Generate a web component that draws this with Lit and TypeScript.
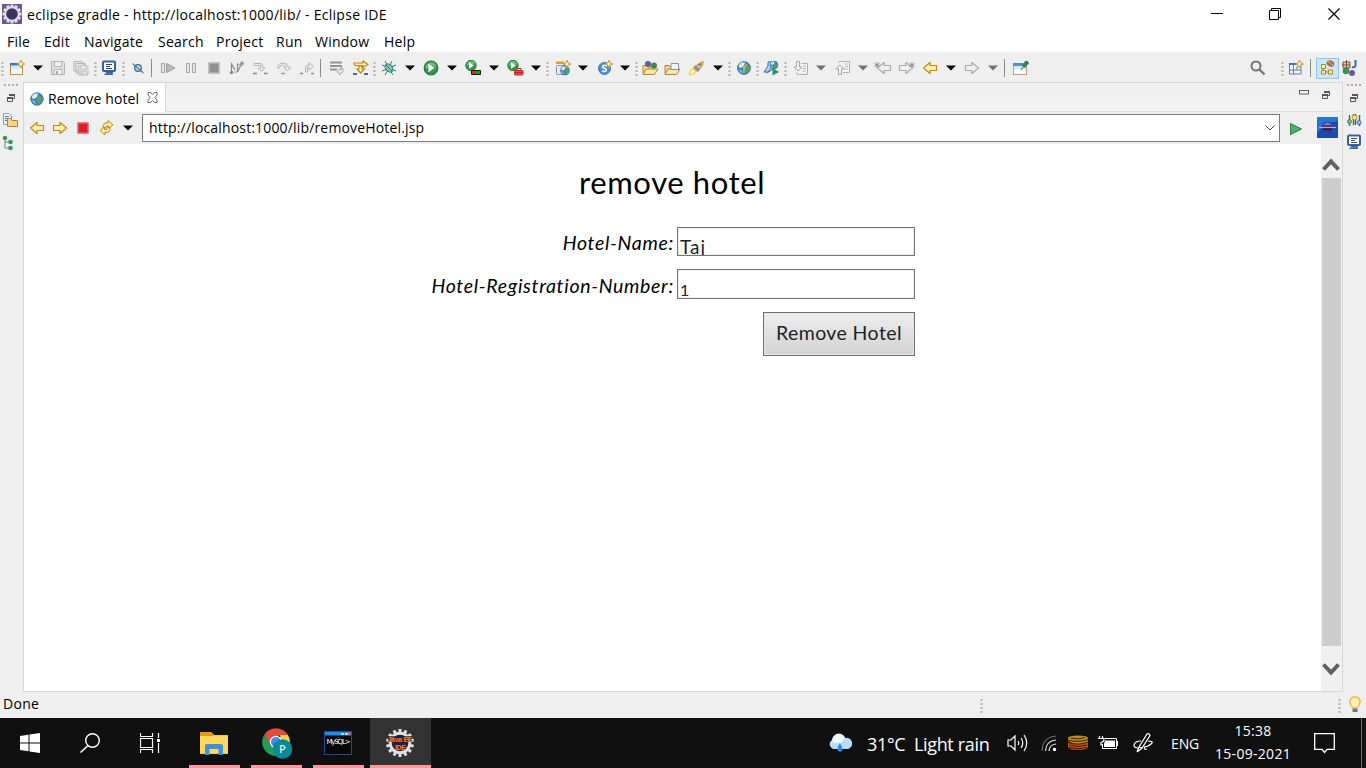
import { LitElement, html, svg, css, TemplateResult } from "lit";
import { customElement, property } from "lit/decorators.js";

const icon = (w: number, h: number, body: unknown) =>
  html`<svg width=${w} height=${h} viewBox="0 0 ${w} ${h}" fill="none">${body}</svg>`;

const star = (x: number, y: number) =>
  svg`<path transform="translate(${x} ${y})" d="M0-3.8 1.2-1.2 3.8 0 1.2 1.2 0 3.8-1.2 1.2-3.8 0-1.2-1.2Z" fill="#fff6c8" stroke="#bd942c" stroke-width="1"/>`;
const globe = (x: number, y: number, r: number) =>
  svg`<g transform="translate(${x} ${y}) scale(${r / 6})"><circle r="6" fill="#3d83bd" stroke="#2a6596" stroke-width=".6"/><path d="M-4-4Q-1-6 1-5L0-2-3 0-5-1Z" fill="#dcefff"/><path d="M1-3 5-2 5 2 2 5 0 2-1 0Z" fill="#5d9c62"/><path d="M-5 1-2 2-1 5Q-4 4-5 1Z" fill="#85bde5"/></g>`;
const play = (x: number, y: number, r: number) =>
  svg`<g transform="translate(${x} ${y}) scale(${r / 7})"><circle r="6.5" fill="#35964b" stroke="#23803b" stroke-width="1.2"/><path d="M-5-2Q-3-6 2-5.5 5-4 5-1 0-3-5 1Z" fill="#72bc7c"/><path d="M-2.5-4 3.5 0-2.5 4Z" fill="#fff"/></g>`;
const fold = svg`<path d="M1 13.5V5.5H5L6.5 7H12V13.5Z" fill="#f6d489" stroke="#b58430"/><path d="M1 14.5 4 9H16L12.5 14.5Z" fill="#fde8ac" stroke="#b58430"/>`;
const arrowR = (fill: string, stroke: string) =>
  svg`<path d="M1.5 5.500V10.500H8V13.500L14.500 8 8 2.500V5.500Z" fill=${fill} stroke=${stroke} stroke-width="1.2" stroke-linejoin="round"/>`;
const arrowL = (fill: string, stroke: string) =>
  svg`<path d="M14.500 5.500V10.500H8V13.500L1.500 8 8 2.500V5.500Z" fill=${fill} stroke=${stroke} stroke-width="1.2" stroke-linejoin="round"/>`;
const asterisk = (x: number) => svg`<path transform="translate(${x} 5)" d="M0-3V3M-2.600-1.500 2.600 1.500M-2.600 1.500 2.600-1.500" stroke="#8c8c8c"/>`;
const floppy = svg`<path d="M1.500 1.500H13L14.500 3V14.500H1.500Z" fill="#e0e0e0" stroke="#b2b2b2"/><path d="M4.500 1.500H11.500V6.500H4.500ZM4 9.500H12V14.500H4Z" fill="#f1f1f1" stroke="#b5b5b5"/><path d="M6 11H8V14H6Z" fill="#aaa"/>`;
const screen = (ink: string) =>
  svg`<rect x="2" y="1.500" width="12" height="9.500" rx="1" fill="#fff" stroke="#33609f" stroke-width="2"/><path d="M5 4.500H11M5 6.500H9M5 8.500H11" stroke=${ink}/><path d="M5 12.500H11V14.200H3.500" stroke="#33609f" stroke-width="1.600"/>`;

const I: Record<string, () => TemplateResult> = {
  dots: () => icon(3, 16, svg`<path d="M.500 2H2.500V4H.500ZM.500 6H2.500V8H.500ZM.500 10H2.500V12H.500ZM.500 14H2.500V16H.500Z" fill="#b9b0a2"/>`),
  sep: () => icon(1, 18, svg`<path d="M.500 0V18" stroke="#8b8b8b"/>`),
  down: () => icon(10, 6, svg`<path d="M0 .500H10L5 5.500Z" fill="#000"/>`),
  downOff: () => icon(10, 6, svg`<path d="M0 .500H10L5 5.500Z" fill="#717171"/>`),
  create: () => icon(16, 16, svg`<rect x="1.500" y="3.500" width="12" height="11" fill="#f3f9fe" stroke="#b5913c"/><path d="M1 3H12V5.500H1Z" fill="#3976b6"/><path d="M2 6H13V9H2Z" fill="#d6e9f8"/>${star(12, 4)}`),
  save: () => icon(16, 16, floppy),
  saveAll: () => icon(16, 16, svg`<path d="M1 1.500H9L10.500 3V11H1ZM3 3.500H12V13H3Z" fill="#e8e8e8" stroke="#b5b5b5"/><g transform="translate(4.500 4.500) scale(.72)">${floppy}</g>`),
  monitor: () => icon(16, 16, screen("#33476b")),
  skip: () => icon(14, 16, svg`<circle cx="7" cy="8" r="3.300" fill="#bfdceb" stroke="#2c7195" stroke-width="1.300"/><path d="M1.500 3.500 12.500 13" stroke="#6a7580" stroke-width="1.200"/>`),
  resume: () => icon(16, 16, svg`<path d="M1.500 3.500H4.500V12.500H1.500Z" fill="#e4e4e4" stroke="#a5a5a5"/><path d="M6.500 3.500V12.500L15 8Z" fill="#bbb" stroke="#9a9a9a"/>`),
  pause: () => icon(16, 16, svg`<path d="M3.500 3.500H6.500V12.500H3.500ZM9.500 3.500H12.500V12.500H9.500Z" fill="#e1e1e1" stroke="#a8a8a8"/>`),
  stopOff: () => icon(16, 16, svg`<rect x="3" y="3" width="10" height="10" fill="#919191" stroke="#b4b4b4" stroke-width="1.500"/>`),
  disconnect: () => icon(16, 16, svg`<path d="M2.500 13V4L6 10M8.500 4V12L13 3" stroke="#8e8e8e" stroke-width="1.300"/><circle cx="2.500" cy="12.500" r="1.700" fill="#888"/><circle cx="13" cy="3.500" r="2" fill="#999"/><path d="M5 12H8M8 3 12 6" stroke="#999"/>`),
  stepInto: () => icon(16, 16, svg`<path d="M2 3.500H8Q10.500 3.500 10.500 6V8H13L9.500 11.500 6 8H8.500V5.500H2Z" fill="#eee" stroke="#b4b4b4"/><path d="M1 13.500H5M12 13.500H15.500" stroke="#888" stroke-width="1.500"/>`),
  stepOver: () => icon(16, 16, svg`<path d="M1.500 8Q2 3 7 3 11.500 3 12 7H14.500L11.500 11 8 7.500H10Q9 5 6.500 5 4 5 3.500 8Z" fill="#eee" stroke="#b4b4b4"/><path d="M5 13.500H9" stroke="#999" stroke-width="1.500"/>`),
  stepOut: () => icon(16, 16, svg`<path d="M6.500 12V8Q6.500 5.500 9 5.500H10V2.500L14.500 6.500 10 10V7.500H8.500V12Z" fill="#eee" stroke="#b4b4b4"/><path d="M1 13.500H4M12 13.500H15" stroke="#888" stroke-width="1.500"/>`),
  dropFrame: () => icon(16, 16, svg`<path d="M1 2.500H13M1 6H13M1 9.500H8" stroke="#969696" stroke-width="1.800"/><path d="M8 12 11 8.500V10.500Q13.500 10.500 12 6.500 17 12.500 11 13V15Z" fill="#eee" stroke="#aaa"/>`),
  filters: () => icon(18, 16, svg`<path d="M2 3H11V1L16 4.500 11 7.500V5.500H4Q2 5.500 2 3ZM7 6H10V9H12.500L8.500 13 5 9H7Z" fill="#fff3bf" stroke="#c38518" stroke-width="1.200"/><path d="M1 14H5M12 14H16" stroke="#496a9c" stroke-width="2"/>`),
  bug: () => icon(16, 16, svg`<path d="M4 1 6 5M11 1 9 5M1 5 5 7M15 5 10 7M1 11 6 9M15 11 10 9M4 15 7 10M12 15 9 10" stroke="#39796f"/><ellipse cx="8" cy="8" rx="3.200" ry="4.600" fill="#8cc9ae" stroke="#247b76" transform="rotate(-40 8 8)"/><path d="M5 5 11 11" stroke="#247b76"/>`),
  run: () => icon(16, 16, play(8, 8, 7.3)),
  coverage: () => icon(18, 16, svg`${play(6, 5.5, 5.6)}<path d="M6.500 10.500H15.500V14.500H6.500Z" fill="#00b300" stroke="#111"/><path d="M7 11H11V14H7Z" fill="#e22"/>`),
  external: () => icon(18, 16, svg`${play(6, 5.5, 5.6)}<rect x="7.500" y="10.500" width="8.500" height="4.500" rx="1" fill="#ef4549" stroke="#ca252b"/><path d="M10 10V8.500H14V10M8 12.500H16" stroke="#c91d23"/>`),
  newWeb: () => icon(16, 16, svg`<rect x="1.500" y="5.500" width="11" height="9" rx="1" fill="#eeeadd" stroke="#7896b2"/><path d="M1 1.500H9V4H1Z" fill="#d5a239"/>${globe(10, 10.5, 4.5)}${star(12, 4)}`),
  servlet: () => icon(16, 16, svg`<circle cx="7.500" cy="8.500" r="6" fill="#4e91ca" stroke="#397db7"/><path d="M10 6Q7 4.500 5.500 6.500 5.500 8 7.500 8.300 10 9 9 10.800 7 12 5 10.800" stroke="#fff" stroke-width="1.500"/>${star(12, 4)}`),
  openType: () => icon(17, 16, svg`${fold}<circle cx="6" cy="4" r="3" fill="#6259a5"/><circle cx="12" cy="5.500" r="3" fill="#39864e"/>`),
  openFolder: () => icon(17, 16, svg`${fold}<path d="M7 3.500H14.500V9.500H7Z" fill="#eef5fb" stroke="#7995b1"/>`),
  rocket: () => icon(18, 16, svg`<path d="M5 10Q8 4 15 1.500 16 5 10 11Z" fill="#f6c268" stroke="#b88a48"/><path d="M5 7 8 5 12 9 10 12Z" fill="#95908b"/><circle cx="12" cy="4.500" r="1.300" fill="#4f79a9"/><path d="M1 15 3 9 6 9 8 12 6 14Z" fill="#fff4a1" stroke="#f5c451"/>`),
  globe: () => icon(16, 16, svg`${globe(8, 8, 6.5)}<path d="M8 8 4 4M8 8 11 4M8 8V13" stroke="#f6d765"/>`),
  webRun: () => icon(17, 16, svg`<path d="M1 12 5 6 5 2H9V7L5 12ZM4 13 10 9" fill="#b4d3ee" stroke="#356ba6"/>${globe(11, 5, 4)}<path d="M9.500 8V15.500L16 12Z" fill="#27974b"/>`),
  annNext: () => icon(16, 16, svg`<path d="M8.500 3.500H14.500V14.500H4V12" fill="#f3f3f3" stroke="#b0b0b0"/><path d="M10 6H13M10 8.500H13M9 11H13" stroke="#b5b5b5"/><path d="M3.500 1.500H6.500V7H9L5 11 1 7H3.500Z" fill="#f4f4f4" stroke="#a4a4a4"/>`),
  annPrev: () => icon(16, 16, svg`<path d="M4 3V1.500H14.500V12.500H8" fill="#f3f3f3" stroke="#b0b0b0"/><path d="M10 4H13M10 6.500H13M9 9H13" stroke="#b5b5b5"/><path d="M3.500 14.500H6.500V9H9L5 5 1 9H3.500Z" fill="#f4f4f4" stroke="#a4a4a4"/>`),
  lastEdit: () => icon(18, 16, svg`<g transform="translate(2 0)">${arrowL("#f0f0f0", "#ababab")}</g>${asterisk(3)}`),
  nextEdit: () => icon(18, 16, svg`${arrowR("#f0f0f0", "#ababab")}${asterisk(14)}`),
  back: () => icon(16, 16, arrowL("#fff0b4", "#c68613")),
  forward: () => icon(16, 16, arrowR("#fff0b4", "#c68613")),
  forwardOff: () => icon(16, 16, arrowR("#f0f0f0", "#ababab")),
  pin: () => icon(18, 16, svg`<rect x="1.500" y="3.500" width="13" height="11" fill="#f7fbff" stroke="#b7a27c"/><path d="M1 3H15V6H1Z" fill="#5792c4"/><path d="M2 6H14V9H2Z" fill="#d5e8f7"/><path d="M9 10 12 6" stroke="#555"/><path d="M9.500 5.500 12 3 13 1H16L17 4 15 5 13 8Z" fill="#36854a"/>`),
  search: () => icon(18, 18, svg`<circle cx="7" cy="7" r="4.500" stroke="#757575" stroke-width="2"/><path d="M10.500 10.500 15.500 15.500" stroke="#757575" stroke-width="2.400"/>`),
  perspective: () => icon(16, 16, svg`<path d="M1.500 3.500H13V14H1.500Z" fill="#edf5fa" stroke="#627c9b"/><path d="M1 4H10" stroke="#3979b3" stroke-width="2"/><path d="M5.500 5V14M2 10H13M9 6V10" stroke="#627c9b"/>${star(11.5, 4)}`),
  javaEE: () => html`<span class="on">${icon(18, 18, svg`<path d="M5 7V13H12" stroke="#9d7930"/><path d="M3.500 5.500H7.500V9.500H3.500ZM3.500 11.500H7.500V15H3.500ZM10.500 11H14.500V15H10.500Z" fill="#fff1a5" stroke="#b78219"/><ellipse cx="12.500" cy="4.500" rx="4" ry="3" fill="#a56943" transform="rotate(25 12.500 4.500)"/><path d="M9.500 2 16 7" stroke="#e3b896"/>`)}</span>`,
  java: () => icon(17, 18, svg`<path d="M2 3H9V9H2ZM5.500 1V9M1 6H9" fill="#e2c8aa" stroke="#7a5137"/><path d="M14.500 1V6Q14.500 9 11 8" stroke="#286fae" stroke-width="2"/><circle cx="5" cy="12" r="3.300" fill="#399056"/><circle cx="11" cy="14" r="3" fill="#6959ab"/>`),
  close: () => icon(11, 11, svg`<path d="M1 .500H3.500L5.500 2.500 7.500.500H10V3L8 5.500 10 8V10.500H7.500L5.500 8.500 3.500 10.500H1V8L3 5.500 1 3Z" fill="#fff" stroke="#666"/>`),
  restore: () => icon(10, 10, svg`<path d="M3.500 1.500H8.500V5.500H7M1.500 4.500H6.500V8.500H1.500Z" stroke="#5d554c"/><path d="M3 1H9V3H3ZM1 4H7V6H1Z" fill="#5d554c"/>`),
  files: () => icon(16, 16, svg`<path d="M1.500 1.500H7L9.500 4V12.500H1.500Z" fill="#eef5fb" stroke="#839dbd"/><path d="M3 4.500H7M3 6.500H7M3 8.500H6" stroke="#4b79aa"/><path d="M5.500 14.500V6.500H9L10 8.500H15.500V14.500Z" fill="#f8d583" stroke="#b48432"/>`),
  tree: () => icon(14, 16, svg`<path d="M3 3V13H9M3 7H9" stroke="#6d8792"/><circle cx="3" cy="3" r="2.300" fill="#3c9557"/><circle cx="8.500" cy="7" r="2.300" fill="#3c9557"/><circle cx="8.500" cy="13" r="2.300" fill="#3c9557"/>`),
  sliders: () => icon(15, 13, svg`<path d="M2.500 1V12M6.500 0V11M8.500 0V11M12.500 1V12" stroke="#38648e" stroke-width="1.400"/><circle cx="2.500" cy="7.500" r="2" fill="#77ba7a" stroke="#4c8850"/><circle cx="7.500" cy="3.500" r="2.500" fill="#ffe479" stroke="#b4871b"/><circle cx="12" cy="8.500" r="2" fill="#9bc7e6" stroke="#3775a6"/>`),
  stop: () => icon(16, 16, svg`<rect x="3" y="3" width="10" height="10" fill="#dc1d2b" stroke="#e0606a" stroke-width="1.500"/>`),
  refresh: () => icon(18, 18, svg`<path d="M5 9Q5 3 10 4V1.500L15 6 10.500 9V7Q8 6 7.500 9Z" fill="#fff0b4" stroke="#c68613"/><path d="M12 8.500Q12 15 7 13V16L2 11.500 6.500 8V10.500Q9 12 9.500 8.500Z" fill="#fff0b4" stroke="#c68613"/>`),
  go: () => icon(14, 14, svg`<path d="M1.500 1.500V12.500L12.500 7Z" fill="#4bb165" stroke="#27823f"/>`),
  volume: () => icon(22, 20, svg`<path d="M1 7H4L8 3V17L4 13H1Z" stroke="#fff" stroke-width="1.200"/><path d="M11 8Q12.500 10 11 12M14 5Q17.500 10 14 15M17 2Q22.500 10 17 18" stroke="#fff" stroke-width="1.200"/>`),
  wifi: () => icon(16, 18, svg`<path d="M1 17Q1 3 15 2" stroke="#777"/><path d="M4.500 17Q5 7 15 6M8 17Q8.500 10.500 15 10" stroke="#ddd" stroke-width="1.200"/><circle cx="13.500" cy="15.500" r="1.700" fill="#fff"/>`),
  stack: () => icon(20, 16, svg`<path d="M0 4V12Q0 15 10 15T20 12V4Z" fill="#2e1b0c"/><path d="M0 7Q10 10 20 6V12Q19 15 10 15T0 12Z" fill="#c24e1e"/><path d="M0 3.500Q0 .500 10 .500T20 3.500V7Q10 11.500 0 6Z" fill="#c08f1b"/><path d="M0 5Q10 8 20 4.500M0 7.500Q10 11 20 7M1 10Q10 13 19 10M1 12.500Q10 15 19 12.500M3 3Q10 5 17 2.500" stroke="#3c1e08" stroke-width="1"/>`),
  battery: () => icon(20, 16, svg`<path d="M1.500 1V3M4.500 1V3M0 3.500H6V5Q5.500 7 3 7.500V10H5" stroke="#fff" stroke-width="1.200"/><path d="M7 3.500H18.500V13.500H4.500V9" stroke="#fff"/><path d="M7 5.500H17V12H6V9Z" fill="#fff"/><path d="M18.500 6H20V11H18.500Z" fill="#fff"/>`),
  pen: () => icon(20, 22, svg`<path d="M4 20 6 15 14 2Q16 1 17 3.500L9 16 4 20M6 15 9 16" stroke="#fff" stroke-width="1.200"/><path d="M8 9Q2 9 1 13 1 16 5 16M15 9Q20 9 19 11 15 15 12 14.500 10 18 14 17" stroke="#fff" stroke-width="1.200"/>`),
};

/** [icon name, centre on the bar, width] */
type Tool = [string, number, number];
const MAIN: Tool[] = [
  ["dots", 2.5, 3], ["create", 17, 16], ["down", 37.5, 10], ["save", 58, 16], ["saveAll", 81, 16], ["dots", 95.5, 3],
  ["monitor", 109, 16], ["dots", 123.5, 3], ["skip", 137.5, 14], ["sep", 151.5, 1], ["resume", 168, 16], ["pause", 191, 16],
  ["stopOff", 214, 16], ["disconnect", 237, 16], ["stepInto", 260, 16], ["stepOver", 283.5, 16], ["stepOut", 307, 16],
  ["sep", 320.5, 1], ["dropFrame", 337, 16], ["filters", 361, 18], ["dots", 374.5, 3], ["bug", 389, 16], ["down", 409.5, 10],
  ["run", 431, 16], ["down", 451.5, 10], ["coverage", 474, 18], ["down", 493.5, 10], ["external", 516, 18], ["down", 535.5, 10],
  ["dots", 547.5, 3], ["newWeb", 563, 16], ["down", 582.5, 10], ["servlet", 605, 16], ["down", 624.5, 10], ["dots", 636.5, 3],
  ["openType", 650.5, 17], ["openFolder", 672.5, 17], ["rocket", 697, 18], ["down", 717.5, 10], ["dots", 729.5, 3],
  ["globe", 743.5, 16], ["dots", 757.5, 3], ["webRun", 771.5, 17], ["dots", 785.5, 3], ["annNext", 800.5, 16], ["downOff", 820.5, 10],
  ["annPrev", 842.5, 16], ["downOff", 862.5, 10], ["lastEdit", 883, 18], ["nextEdit", 907, 18], ["back", 930, 16],
  ["down", 950.5, 10], ["forwardOff", 972, 16], ["downOff", 992.5, 10], ["sep", 1004.5, 1], ["pin", 1021, 18],
  ["search", 1258, 18], ["dots", 1282.5, 3], ["perspective", 1296, 16], ["sep", 1310.5, 1], ["javaEE", 1327, 22], ["java", 1349.5, 17],
];
const NAV: Tool[] = [["back", 13, 16], ["forward", 36, 16], ["stop", 59, 16], ["refresh", 83, 18], ["down", 103.5, 10]];
const TRAY: Tool[] = [["volume", 26, 22], ["wifi", 57, 16], ["stack", 86, 20], ["battery", 116, 20], ["pen", 151, 20]];

@customElement("tool-strip")
class ToolStrip extends LitElement {
  @property({ attribute: false }) tools: Tool[] = [];
  static styles = css`
    :host { display: flex; align-items: center; box-sizing: border-box; }
    .cell { display: flex; flex: none; justify-content: center; align-items: center; }
    svg { display: block; flex: none; }
    .on { display: flex; align-items: center; justify-content: center; flex: none; box-sizing: border-box; width: 23px; height: 21px; background: #cce6f9; border: 1px solid #90c5ee; }
  `;
  render() {
    let right = 0;
    return this.tools.map(([name, centre, w]) => {
      const gap = centre - w / 2 - right;
      right = centre + w / 2;
      return html`<span class="cell" style="width:${w}px;margin-left:${gap}px">${I[name]()}</span>`;
    });
  }
}

const MENU: [string, number][] = [
  ["File", 37], ["Edit", 40], ["Navigate", 74], ["Search", 58], ["Project", 60], ["Run", 39], ["Window", 69], ["Help", 40],
];

const gear = (teeth: number, r: number) =>
  Array.from({ length: teeth }, (_, i) => svg`<rect x="-1.500" y=${-r} width="3" height="5" transform="rotate(${(i * 360) / teeth})"/>`);

@customElement("app-root")
class AppRoot extends LitElement {
  static styles = css`
    :host { display: flex; flex-direction: column; width: 1366px; height: 768px; overflow: hidden; background: #efefef; color: #000; font: 14px/18px "Open Sans", "Noto Sans", sans-serif; }
    svg { display: block; flex: none; }
    .title { display: flex; height: 28px; background: #fff; align-items: center; padding-left: 2px; }
    .title .name { margin-left: 5px; letter-spacing: 0.27px; flex: 1; white-space: nowrap; padding-top: 2px; }
    .win { display: flex; gap: 46px; padding-right: 26px; }
    .win svg:last-child { margin-left: 1px; }
    .menu { display: flex; height: 24px; background: #fff; padding: 5px 0 0 7px; box-sizing: border-box; white-space: nowrap; letter-spacing: 0.25px; }
    .menu span { flex: none; }
    tool-strip.main { height: 30px; flex: none; padding-top: 2px; }
    .work { display: flex; height: 610px; flex: none; }
    .trim { width: 23px; display: flex; flex-direction: column; align-items: center; padding: 1px 1px 0 0; box-sizing: border-box; }
    .trim.left { align-items: flex-start; padding: 1px 0 0 2px; }
    .trim .grip { margin-bottom: 7px; }
    .trim .r { margin-bottom: 11px; }
    .trim .n { margin-bottom: 7px; }
    .left .grip { margin-left: 2px; }
    .left .r { margin: 0 0 9px 4px; }
    .editor { flex: 1; border: 1px solid #d6d6d6; box-sizing: border-box; display: flex; flex-direction: column; }
    .tabs { height: 29px; box-sizing: border-box; border-bottom: 1px solid #dcdcdc; display: flex; background: linear-gradient(#efefef, #f3f3f3); }
    .tab { width: 142px; height: 29px; background: #fff; border-right: 1px solid #dcdcdc; display: flex; align-items: center; padding: 2px 0 0 6px; box-sizing: border-box; }
    .tab span { margin: 0 8px 0 4px; white-space: nowrap; letter-spacing: 0.12px; }
    .tab svg:last-child { margin-bottom: 2px; }
    .tabs .ctl { margin-left: auto; padding: 7px 11px 0 0; display: flex; gap: 12px; }
    .nav { height: 32px; display: flex; }
    .nav tool-strip { width: 118px; }
    .addr { width: 1138px; height: 28px; margin-top: 2px; border: 1px solid #7a7a7a; box-sizing: border-box; background: #fff; display: flex; align-items: center; padding: 0 4px 0 6px; letter-spacing: 0.16px; justify-content: space-between; }
    .go { margin: 10px 0 0 9px; }
    .ball { margin: 5px 0 0 14px; }
    .view { flex: 1; display: flex; background: #fff; min-height: 0; }
    .page { flex: 1; font-family: Lato, sans-serif; padding-left: 406px; }
    .page h1 { font: 400 31px/36px Lato, sans-serif; letter-spacing: 0.62px; margin: 20px 0 27px 149px; }
    .form { display: grid; grid-template-columns: 243px 238px; column-gap: 4px; grid-template-rows: 29px 30px 44px; row-gap: 13px; font-size: 19px; line-height: 24px; }
    .form label { font-size: 19.5px; font-style: italic; text-align: right; align-self: center; white-space: nowrap; padding-top: 3px; letter-spacing: 0.68px; margin-right: -1px; }
    .field { border: 1px solid #767676; box-shadow: inset 0 0 0 1px #eee; padding: 7px 0 0 2px; overflow: hidden; color: #222; box-sizing: border-box; letter-spacing: 1px; }
    .num { font-size: 16px; line-height: 23px; padding-top: 8px; }
    .btn { grid-column: 2; justify-self: end; width: 152px; border: 1px solid #707070; background: linear-gradient(#eee, #d2d2d2); color: #222; box-shadow: inset 0 0 0 1px #e4e4e4; box-sizing: border-box; display: flex; align-items: center; justify-content: center; font-size: 19.5px; letter-spacing: 0.4px; padding-bottom: 2px; }
    .scroll { width: 21px; background: #f0f0f0; display: flex; flex-direction: column; align-items: center; padding: 14px 1px 0 0; box-sizing: border-box; }
    .thumb { width: 19px; height: 468px; background: #cdcdcd; margin: 7px 0 17px; }
    .status { height: 26px; display: flex; flex: none; padding-left: 3px; align-items: center; }
    .status .word { width: 37px; letter-spacing: 0.3px; padding-bottom: 2px; }
    .status .g1 { margin-left: 940px; }
    .status .g2 { margin-left: 355px; margin-right: 8px; }
    .task { height: 50px; display: flex; background: #101010; color: #fff; }
    .b { height: 50px; display: flex; align-items: center; justify-content: center; box-sizing: border-box; flex: none; }
    .sys { width: 60px; }
    .app { width: 51px; margin-right: 11px; border-bottom: 3px solid #ff979d; padding-right: 1px; padding-top: 2px; }
    .app.first { margin-left: 9px; }
    .app.chrome { padding: 2px 0 0 1px; }
    .app.last { margin-right: 6px; }
    .app.active { width: 61px; background: #333; margin: 0; padding-right: 2px; }
    .cloud { margin-left: 397px; }
    .wx { margin-left: 15px; width: 125px; font-size: 18px; letter-spacing: -0.34px; white-space: pre; line-height: 52px; }
    tool-strip.tray { width: 179px; }
    .eng { width: 30px; line-height: 52px; letter-spacing: -0.1px; white-space: nowrap; }
    .clock { width: 84px; margin-left: 10px; text-align: center; line-height: 23px; padding-top: 1px; letter-spacing: 0.3px; white-space: nowrap; }
    .note { margin-left: 19px; }
    .desk { margin-left: 26px; width: 1px; height: 50px; background: #6a6a6a; }
  `;

  private title() {
    return html`<div class="title">
      ${icon(20, 20, svg`<rect width="20" height="20" fill="#6b5892"/><g transform="translate(10 10)" fill="#e0dde9">${gear(12, 9.5)}<circle r="6.800" fill="#3a3356" stroke="#e0dde9" stroke-width="2"/></g>`)}
      <span class="name">eclipse gradle - http://localhost:1000/lib/ - Eclipse IDE</span>
      <div class="win">
        ${icon(12, 12, svg`<path d="M0 5.500H12" stroke="#000"/>`)}
        ${icon(12, 12, svg`<path d="M.500 2.500H9.500V11.500H.500ZM2.500 2V.500H11.500V9.500H10" stroke="#000"/>`)}
        ${icon(12, 12, svg`<path d="M.500.500 11.500 11.500M11.500.500.500 11.500" stroke="#000" stroke-width="1.200"/>`)}
      </div>
    </div>`;
  }

  private grip() {
    return icon(14, 3, svg`<path d="M0 1H2V3H0ZM4 1H6V3H4ZM8 1H10V3H8ZM12 1H14V3H12Z" fill="#b5ad9f"/>`);
  }

  private editor() {
    return html`<div class="editor">
      <div class="tabs">
        <div class="tab">${icon(14, 14, globe(7, 7, 6.3))}<span>Remove hotel</span>${I.close()}</div>
        <div class="ctl">${icon(10, 6, svg`<rect x=".500" y=".500" width="9" height="3.500" fill="#fff" stroke="#5d5d5d"/>`)}${I.restore()}</div>
      </div>
      <div class="nav">
        <tool-strip .tools=${NAV}></tool-strip>
        <div class="addr"><span>http://localhost:1000/lib/removeHotel.jsp</span>${icon(10, 6, svg`<path d="M.500.500 5 5 9.500.500" stroke="#444"/>`)}</div>
        <div class="go">${I.go()}</div>
        <div class="ball">${icon(21, 21, svg`<rect width="21" height="21" fill="#174fae"/><path d="M0 0H21V4Q8 5 0 16Z" fill="#2575d2"/><circle cx="10.500" cy="10.500" r="5.800" fill="#43358c"/><path d="M6.500 8Q10.500 3.500 14.500 8Z" fill="#8d7cc9"/><path d="M2 10.500H19" stroke="#b5a7ee" stroke-width="1.200"/><path d="M6 12.300H15" stroke="#1c1648" stroke-width="1.400"/>`)}</div>
      </div>
      <div class="view">
        <div class="page">
          <h1>remove hotel</h1>
          <div class="form">
            <label>Hotel-Name:</label><div class="field">Taj</div>
            <label>Hotel-Registration-Number:</label><div class="field num">1</div>
            <div class="btn">Remove Hotel</div>
          </div>
        </div>
        <div class="scroll">
          ${icon(18, 13, svg`<path d="M1.500 11.500 9 3.500 16.500 11.500" stroke="#606060" stroke-width="4"/>`)}
          <div class="thumb"></div>
          ${icon(18, 13, svg`<path d="M1.500 1.500 9 9.500 16.500 1.500" stroke="#606060" stroke-width="4"/>`)}
        </div>
      </div>
    </div>`;
  }

  private taskbar() {
    return html`<div class="task">
      <div class="b sys">${icon(20, 20, svg`<path d="M0 3 8.500 1.800V9.500H0ZM9.500 1.600 20 0V9.500H9.500ZM0 10.500H8.500V18.200L0 17ZM9.500 10.500H20V20L9.500 18.400Z" fill="#fff"/>`)}</div>
      <div class="b sys">${icon(20, 20, svg`<circle cx="12.500" cy="7.500" r="6.800" stroke="#fff" stroke-width="1.400"/><path d="M8 12.500.500 19.500" stroke="#fff" stroke-width="1.500"/>`)}</div>
      <div class="b sys">${icon(20, 20, svg`<path d="M.500 0V3.500H12.500V0M.500 20V16.500H12.500V20M.500 5.500H12.500V14.500H.500ZM18.500 0V5M18.500 10V20" stroke="#fff" stroke-width="1.200"/><path d="M17 6H20V9H17Z" fill="#fff"/>`)}</div>
      <div class="b app first">${icon(28, 24, svg`<path d="M0 1H11L14 4H28V23H0Z" fill="#f9c93e"/><path d="M0 1H11L14 4 12 5H0Z" fill="#df9c15"/><path d="M0 5H28V22H0Z" fill="#ffd760"/><path d="M5 24V15Q5 13 7 13H21Q23 13 23 15V24H18.500V18H9.500V24Z" fill="#3b93d8"/>`)}</div>
      <div class="b app chrome">${icon(32, 32, svg`<g transform="translate(15 15)"><path d="M-12-7A14 14 0 0 1 12-7L0-6-6 3Z" fill="#e44b3f"/><path d="M12-7A14 14 0 0 1 2 14L6 3 4-7Z" fill="#fbd141"/><path d="M-12-7-5 4 3 5-1 14A14 14 0 0 1-12-7Z" fill="#209d59"/><circle r="6.300" fill="#fff"/><circle r="5" fill="#4589ed"/></g><circle cx="21.500" cy="22" r="9.800" fill="#09899a"/><text x="18" y="26" font-family="Open Sans" font-size="11" font-weight="600" fill="#d9f1f3">P</text>`)}</div>
      <div class="b app last">${icon(28, 24, svg`<rect x=".500" y=".500" width="27" height="23" fill="#080808" stroke="#1b4e99"/><path d="M1 1H27V4.500H1Z" fill="#238ae7"/><path d="M17 2H20V4H17ZM21 2H24V4H21Z" fill="#b1daf9"/><path d="M24 2H27V4H24Z" fill="#e65a50"/><text x="2.500" y="13" textLength="24" font-family="DejaVu Sans" font-size="7" fill="#fff">MySQL&gt;</text>`)}</div>
      <div class="b app active">${icon(28, 28, svg`<g transform="translate(14 14)" fill="#dedede">${gear(14, 14)}<circle r="9.800" fill="#24203b" stroke="#dedede" stroke-width="3"/></g><path d="M2 7H26V13H2Z" fill="#24203b" opacity=".75"/><g font-family="Liberation Sans" font-weight="700" font-size="7" fill="#ee812a"><text x="1.500" y="12.500" textLength="25">Java EE</text><text x="9" y="20.500" textLength="11">IDE</text></g>`)}</div>
      <div class="b cloud">${icon(24, 20, svg`<path d="M5 16A5 5 0 0 1 4 7 8 8 0 0 1 17 5 5.700 5.700 0 0 1 20 16Z" fill="#b9ddfb"/><path d="M4 7Q5 1 11 .500 16 1 17 5L13 10 6 10Z" fill="#eef8ff"/><path d="M12 10Q9 14 9.500 17 12 20.500 14.500 17 14.500 14 12 10Z" fill="#2b8ee9"/>`)}</div>
      <div class="wx">31°C  Light rain</div>
      <tool-strip class="tray" .tools=${TRAY}></tool-strip>
      <div class="eng">ENG</div>
      <div class="clock">15:38<br />15-09-2021</div>
      <div class="b note">${icon(21, 21, svg`<path d="M.700.700H20.300V16.300H13L10.500 19.500 8 16.300H.700Z" stroke="#fff" stroke-width="1.300"/>`)}</div>
      <div class="desk"></div>
    </div>`;
  }

  render() {
    return html`
      ${this.title()}
      <div class="menu">${MENU.map(([t, w]) => html`<span style="width:${w}px">${t}</span>`)}</div>
      <tool-strip class="main" .tools=${MAIN}></tool-strip>
      <div class="work">
        <div class="trim left"><div class="grip">${this.grip()}</div><div class="r">${I.restore()}</div><div class="n">${I.files()}</div>${I.tree()}</div>
        ${this.editor()}
        <div class="trim"><div class="grip">${this.grip()}</div><div class="r">${I.restore()}</div><div class="n">${I.sliders()}</div>${I.monitor()}</div>
      </div>
      <div class="status"><span class="word">Done</span><span class="g1">${I.dots()}</span><span class="g2">${I.dots()}</span>${icon(12, 18, svg`<path d="M4 12Q1 9 1 6 1 1 6 1 11 1 11 6 11 9 8 12Z" fill="#fff0b8" stroke="#f0b84e" stroke-width="1.500"/><path d="M3.500 12.500H8.500V16H3.500Z" fill="#617b88"/>`)}</div>
      ${this.taskbar()}
    `;
  }
}
